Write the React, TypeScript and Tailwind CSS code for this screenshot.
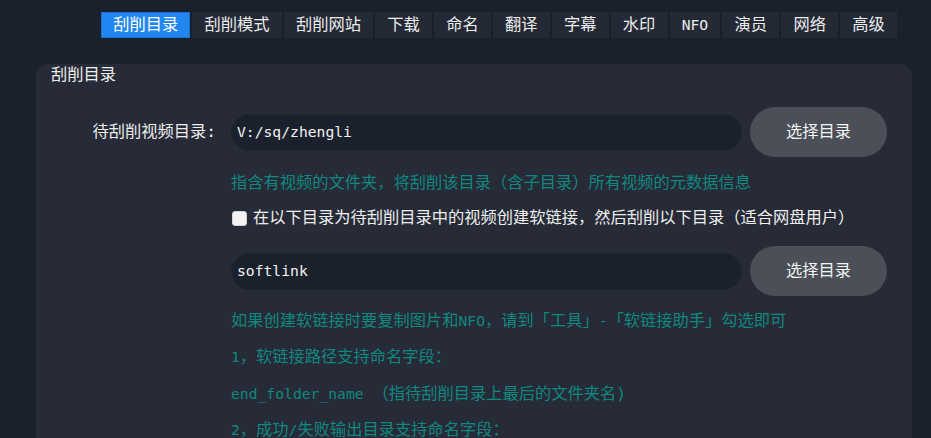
import React from "react";

const M = ({ children }: { children: React.ReactNode }) => (
  <span className="text-[14.7px]">{children}</span>
);

const tabs = ["刮削目录", "刮削模式", "刮削网站", "下载", "命名", "翻译", "字幕", "水印", "NFO", "演员", "网络", "高级"];

function PathRow({ value }: { value: string }) {
  return (
    <div className="flex items-center">
      <div className="flex h-[37px] flex-1 items-center rounded-full border border-[#1e2530] bg-[#1b212c] pl-[5px] text-[14.7px] text-[#f2f2f2]">
        {value}
      </div>
      <button className="ml-2 h-[50px] w-[137px] rounded-full bg-[#4a4f58] text-[16.25px] text-[#f4f4f4]">
        选择目录
      </button>
    </div>
  );
}

export default function App() {
  return (
    <div
      className="h-[438px] w-[931px] overflow-hidden bg-[#1b212c] text-[16.25px] text-[#eeeeee]"
      style={{ fontFamily: '"DejaVu Sans Mono", "Noto Sans CJK SC", monospace' }}
    >
      <div className="flex gap-[2px] pl-[101px] pt-[12px]">
        {tabs.map((t, i) => (
          <div
            key={t}
            className={
              i === 0
                ? "h-[26px] border border-[#1a6fd0] bg-[#2187f0] px-[11.2px] leading-[24px] text-white"
                : "h-[26px] border border-[#232936] bg-[#232935] px-[11.2px] leading-[24px] text-[#ececec]"
            }
          >
            {t === "NFO" ? <M>{t}</M> : t}
          </div>
        ))}
      </div>

      <div className="ml-[36px] mr-[19px] mt-[26px] rounded-xl bg-[#262b37] pb-10">
        <div className="px-[15px] pt-[1px] leading-[20px]">刮削目录</div>

        <div className="mt-[22px] flex">
          <div className="flex h-[50px] w-[180px] items-center justify-end">待刮削视频目录:</div>
          <div className="ml-[15px] mr-[25px] flex-1">
            <PathRow value="V:/sq/zhengli" />
            <div className="mt-[14px] leading-[24px] text-[#0f8880]">
              指含有视频的文件夹，将刮削该目录（含子目录）所有视频的元数据信息
            </div>
            <div className="mt-[11px] flex h-[24px] items-center">
              <span className="ml-[1px] h-[15px] w-[15px] rounded-[3px] border border-[#d4d4d4] bg-[#f3f3f3]" />
              <span className="ml-[6px]">在以下目录为待刮削目录中的视频创建软链接，然后刮削以下目录（适合网盘用户）</span>
            </div>
            <div className="mt-[16px]">
              <PathRow value="softlink" />
            </div>
            <div className="mt-[13px] leading-[24px] text-[#0f8880]">
              如果创建软链接时要复制图片和<M>NFO</M>，请到「工具」<M>-</M>「软链接助手」勾选即可
            </div>
            <div className="mt-[12px] leading-[24px] text-[#0f8880]">
              <M>1</M>，软链接路径支持命名字段：
            </div>
            <div className="mt-[13px] leading-[24px] text-[#0f8880]">
              <M>end_folder_name  </M>（指待刮削目录上最后的文件夹名)
            </div>
            <div className="mt-[12px] leading-[24px] text-[#0f8880]">
              <M>2</M>，成功<M>/</M>失败输出目录支持命名字段：
            </div>
            <div className="mt-[12px] leading-[24px] text-[#0f8880]">
              <M>success_folder</M>
            </div>
          </div>
        </div>
      </div>
    </div>
  );
}
